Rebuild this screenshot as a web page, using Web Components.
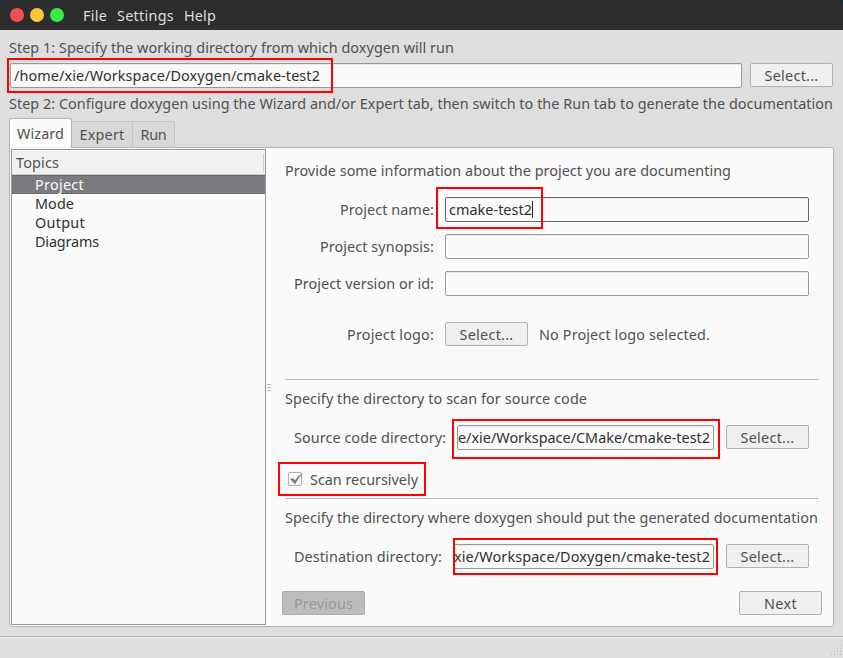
<!DOCTYPE html>
<html lang="en">
<head>
<meta charset="utf-8">
<title>Doxygen GUI frontend</title>
<style>
html,body{margin:0;height:100%;overflow:hidden}
body{font:14.4px/20px "Noto Sans","Open Sans",sans-serif;color:#505050;background:#0d3340}
</style>
</head>
<body>
<doxy-window></doxy-window>
<script>
const define=(name,html,init)=>{
  const t=document.createElement('template');t.innerHTML=html;
  customElements.define(name,class extends HTMLElement{
    constructor(){super();this.attachShadow({mode:'open'}).append(t.content.cloneNode(true));}
    connectedCallback(){if(init)init(this,this.shadowRoot);}
  });
};

// A single line of text whose tracking is adjusted to a given advance width.
define('fit-text',`<style>:host{display:block;white-space:nowrap;height:20px}span{display:inline-block}</style><span></span>`,(el,r)=>{
  const s=r.querySelector('span');s.textContent=el.getAttribute('text');
  const w=+el.getAttribute('w');
  el.style.width=w+'px';
  s.style.letterSpacing=(w-s.getBoundingClientRect().width)/s.textContent.length+'px';
});

define('ui-button',`<style>
:host{display:flex;box-sizing:border-box;width:83px;height:24px;flex:none;justify-content:center;padding-top:2px;border:1px solid #b1b1b1;border-radius:2px;background:#efefef;color:#505050}
:host([disabled]){background:#bdbdbd;border-color:#aaa;color:#979797}
</style><slot></slot>`);

define('ui-field',`<style>
:host{display:flex;box-sizing:border-box;height:25px;align-items:center;border:1px solid #999;border-radius:2px;background:#fafafa;box-shadow:inset 0 1px #eaeaea;color:#303030;padding:0 3px;overflow:hidden}
:host([focused]){border-color:#666}
:host([end]){justify-content:flex-end;padding-left:0}
i{display:none;width:1px;height:17px;background:#222}
:host([focused]) i{display:block}
</style><slot></slot><i></i>`);

define('menu-bar',`<style>
:host{display:flex;height:30px;background:#2d2d2d;color:#dfdfdf;border-radius:6px 6px 0 0;align-items:center;padding-left:10px;box-sizing:border-box}
i{width:14px;height:14px;border-radius:50%;margin-right:6px}
nav{display:flex;gap:10px;margin:2px 0 0 13px}
</style><i style="background:#f25056"></i><i style="background:#fac536"></i><i style="background:#39ea49"></i>
<nav><fit-text text="File" w="24"></fit-text><fit-text text="Settings" w="57"></fit-text><fit-text text="Help" w="32"></fit-text></nav>`);

define('ui-tabs',`<style>
:host{display:flex;align-items:flex-end;height:30px;margin-bottom:-1px;position:relative}
div{box-sizing:border-box;border:1px solid #c4c4c4;border-left:0;height:27px;background:#d8d8d8;display:flex;justify-content:center;padding-top:3px;margin-bottom:0}
.a{height:30px;width:63px;border:1px solid #b4b4b4;border-bottom:0;background:#fafafa;border-radius:3px 3px 0 0;padding-top:5px}
div:not(.a){border-bottom-color:#b4b4b4}
</style><div class="a"><fit-text text="Wizard" w="47"></fit-text></div><div style="width:61px"><fit-text text="Expert" w="45"></fit-text></div><div style="width:42px;border-radius:0 3px 0 0"><fit-text text="Run" w="26"></fit-text></div>`);

define('topic-tree',`<style>
:host{display:block;box-sizing:border-box;width:255px;height:476px;border:1px solid #999;background:#fafafa;color:#303030;flex:none}
header{height:25px;box-sizing:border-box;border-bottom:1px solid #c8c8c8;border-top:1px solid #fafafa;background:#f0f0f0;color:#505050;display:flex;justify-content:space-between;padding:2px 1px 0 4px}
header i{width:1px;height:17px;margin-top:1px;background:#ccc}
div{height:19px;box-sizing:border-box;padding-left:23px}
.s{background:#7a7c80;color:#fafafa;border-top:1px solid #696b6e;border-bottom:1px solid #696b6e}
.s fit-text{margin-top:-1px}
</style><header><fit-text text="Topics" w="43"></fit-text><i></i></header>
<div class="s"><fit-text text="Project" w="49"></fit-text></div>
<div><fit-text text="Mode" w="39"></fit-text></div>
<div><fit-text text="Output" w="50"></fit-text></div>
<div><fit-text text="Diagrams" w="64"></fit-text></div>`);

define('split-handle',`<style>:host{display:flex;flex-direction:column;gap:2px;width:4px;margin:235px 14px 0 1px;flex:none;align-self:flex-start}i{height:1px;background:#b8b8b8}</style><i></i><i></i><i></i>`);

define('check-box',`<style>:host{display:flex;align-items:center;gap:7px;height:20px}svg{display:block}::slotted(*){margin-top:2px}</style>
<svg width="16" height="16" viewBox="0 0 16 16"><rect x=".5" y="1.5" width="13" height="13" rx="1.5" fill="#f7f7f7" stroke="#b1b1b1"/><path d="M2.2 8.2 4.8 6.9 6.8 9.6Q10 4.4 15.4 1.6 10.8 5.8 7.4 12.8H6.3Q4.6 10 2.2 8.2Z" fill="#777a7d"/></svg><slot></slot>`);

define('wizard-form',`<style>
:host{display:flex;flex-direction:column;width:540px}
.row{display:flex;align-items:center;height:25px;margin-bottom:12px}
.lab{width:149px;display:flex;justify-content:flex-end;margin-right:11px;flex:none}
.row ui-field{width:364px}
hr{border:0;height:1px;background:#b8b8b8;width:534px;margin:0;flex:none}
.dir{display:flex;height:25px;padding-left:9px;align-items:flex-start}
.dir ui-field{margin-left:auto;margin-right:12px}
.dir{width:515px}
.dir>fit-text{margin-top:3px}
.nav{display:flex;justify-content:space-between;margin:22px 0 0 -3px;width:540px}
</style>
<fit-text text="Provide some information about the project you are documenting" w="446" style="margin:12px 0 16px"></fit-text>
<div class="row"><div class="lab"><fit-text text="Project name:" w="94"></fit-text></div><ui-field focused><fit-text text="cmake-test2" w="83"></fit-text></ui-field></div>
<div class="row"><div class="lab"><fit-text text="Project synopsis:" w="114"></fit-text></div><ui-field></ui-field></div>
<div class="row"><div class="lab"><fit-text text="Project version or id:" w="140"></fit-text></div><ui-field></ui-field></div>
<div class="row" style="margin:14px 0 32px"><div class="lab"><fit-text text="Project logo:" w="87"></fit-text></div><ui-button style="margin-bottom:1px"><fit-text text="Select..." w="54"></fit-text></ui-button><fit-text style="margin-left:11px" text="No Project logo selected." w="171"></fit-text></div>
<hr>
<fit-text text="Specify the directory to scan for source code" w="302" style="margin:9px 0 16px"></fit-text>
<div class="dir"><fit-text text="Source code directory:" w="152"></fit-text><ui-field end style="width:257px"><fit-text text="e/xie/Workspace/CMake/cmake-test2" w="252"></fit-text></ui-field><ui-button><fit-text text="Select..." w="54"></fit-text></ui-button></div>
<check-box style="margin:19px 0 9px 3px"><fit-text text="Scan recursively" w="108" style="margin-left:-1px"></fit-text></check-box>
<hr>
<fit-text text="Specify the directory where doxygen should put the generated documentation" w="533" style="margin:9px 0 16px"></fit-text>
<div class="dir"><fit-text text="Destination directory:" w="148"></fit-text><ui-field end style="width:261px"><fit-text text="xie/Workspace/Doxygen/cmake-test2" w="256"></fit-text></ui-field><ui-button><fit-text text="Select..." w="54"></fit-text></ui-button></div>
<div class="nav"><ui-button disabled><fit-text text="Previous" w="59"></fit-text></ui-button><ui-button><fit-text text="Next" w="33"></fit-text></ui-button></div>`);

// Red outline drawn over the window to call attention to a control.
define('call-out',`<style>:host{position:absolute;box-sizing:border-box;border:2px solid #fd0000}</style>`,el=>{
  const [x,y,w,h]=el.getAttribute('box').split(' ');
  Object.assign(el.style,{left:x+'px',top:y+'px',width:w+'px',height:h+'px'});
});

define('status-bar',`<style>:host{display:flex;box-sizing:border-box;height:22px;border-top:1px solid #b8b8b8;box-shadow:inset 0 1px #ececec;justify-content:flex-end;align-items:flex-end;padding:0 1px 2px 0}svg{display:block}</style>
<svg width="11" height="11" fill="#b4b4b4"></svg>`,(el,r)=>{
  let s='';for(let i=0;i<4;i++)for(let j=3-i;j<4;j++)s+=`<rect x="${j*3}" y="${i*3}" width="1" height="1"/>`;
  r.querySelector('svg').innerHTML=s;
});

define('doxy-window',`<style>
:host{display:flex;flex-direction:column;width:843px;height:658px;position:relative;overflow:hidden;background:linear-gradient(transparent 30px,#dedede 30px)}
main{height:606px;padding:8px 9px 0;box-sizing:border-box;background:#dedede}
.path{display:flex;gap:8px;margin:5px 0 7px;padding-left:1px}
.path ui-field{width:732px}
.panel{display:flex;box-sizing:border-box;width:825px;height:480px;border:1px solid #b4b4b4;border-radius:0 3px 3px 3px;background:#fafafa;padding:1px}
status-bar{background:#dedede}
</style>
<menu-bar></menu-bar>
<main>
<fit-text text="Step 1: Specify the working directory from which doxygen will run" w="445"></fit-text>
<div class="path"><ui-field><fit-text text="/home/xie/Workspace/Doxygen/cmake-test2" w="306"></fit-text></ui-field><ui-button><fit-text text="Select..." w="54"></fit-text></ui-button></div>
<fit-text style="margin:-1px 0 4px" text="Step 2: Configure doxygen using the Wizard and/or Expert tab, then switch to the Run tab to generate the documentation" w="824"></fit-text>
<ui-tabs></ui-tabs>
<div class="panel"><topic-tree></topic-tree><split-handle></split-handle><wizard-form></wizard-form></div>
</main>
<status-bar></status-bar>
<call-out box="7 58 326 35"></call-out>
<call-out box="436 187 107 42"></call-out>
<call-out box="452 419 268 40"></call-out>
<call-out box="278 462 148 34"></call-out>
<call-out box="453 538 265 37"></call-out>`);
</script>
</body>
</html>
